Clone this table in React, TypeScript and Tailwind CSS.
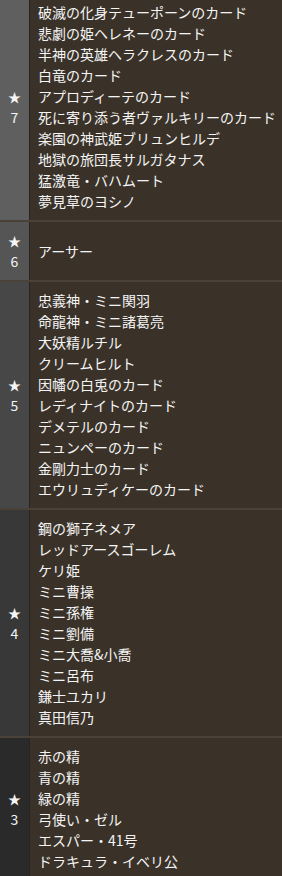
import React from 'react';

const GROUPS = [
  {
    rarity: 7,
    bg: 'bg-[#5f5f5f]',
    cards: [
      '破滅の化身テューポーンのカード',
      '悲劇の姫ヘレネーのカード',
      '半神の英雄ヘラクレスのカード',
      '白竜のカード',
      'アプロディーテのカード',
      '死に寄り添う者ヴァルキリーのカード',
      '楽園の神武姫ブリュンヒルデ',
      '地獄の旅団長サルガタナス',
      '猛激竜・バハムート',
      '夢見草のヨシノ',
    ],
  },
  { rarity: 6, bg: 'bg-[#555555]', cards: ['アーサー'] },
  {
    rarity: 5,
    bg: 'bg-[#474747]',
    cards: [
      '忠義神・ミニ関羽',
      '命龍神・ミニ諸葛亮',
      '大妖精ルチル',
      'クリームヒルト',
      '因幡の白兎のカード',
      'レディナイトのカード',
      'デメテルのカード',
      'ニュンペーのカード',
      '金剛力士のカード',
      'エウリュディケーのカード',
    ],
  },
  {
    rarity: 4,
    bg: 'bg-[#383838]',
    cards: [
      '鋼の獅子ネメア',
      'レッドアースゴーレム',
      'ケリ姫',
      'ミニ曹操',
      'ミニ孫権',
      'ミニ劉備',
      'ミニ大喬&小喬',
      'ミニ呂布',
      '鎌士ユカリ',
      '真田信乃',
    ],
  },
  {
    rarity: 3,
    bg: 'bg-[#2a2a2a]',
    cards: ['赤の精', '青の精', '緑の精', '弓使い・ゼル', 'エスパー・41号', 'ドラキュラ・イベリ公'],
  },
];

export default function App() {
  return (
    <div className="h-[876px] w-[282px] overflow-hidden bg-[#3a3229] text-[14px] leading-[21px] text-[#f4f4f4] [font-family:'Noto_Sans_CJK_JP','Noto_Sans',sans-serif]">
      <div className="-mt-[6px]">
        {GROUPS.map((g) => (
          <div key={g.rarity} className="flex border-b-2 border-[#4a4238]">
            <div className={`flex w-[30px] shrink-0 flex-col items-center justify-center border-r border-[#262320] py-2 ${g.bg}`}>
              <span className="text-[13px]">★</span>
              <span>{g.rarity}</span>
            </div>
            <ul className="flex flex-1 flex-col justify-center py-2 pl-2">
              {g.cards.map((c) => (
                <li key={c} className="whitespace-nowrap">{c}</li>
              ))}
            </ul>
          </div>
        ))}
      </div>
    </div>
  );
}
